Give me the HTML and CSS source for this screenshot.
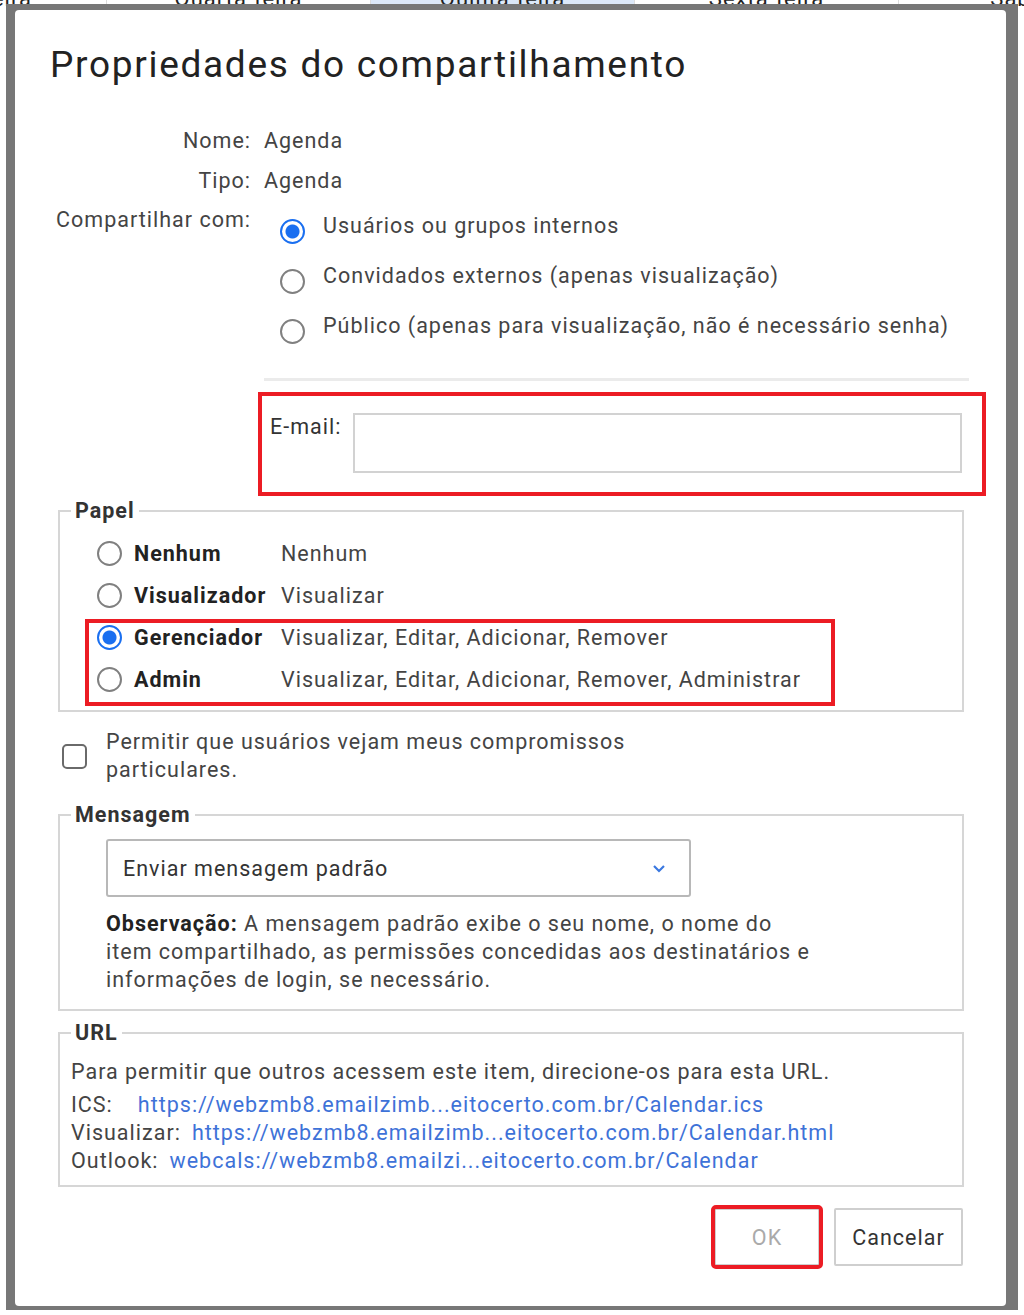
FILE: index.html
```html
<!DOCTYPE html>
<html lang="pt-BR">
<head>
    <meta charset="UTF-8">
    <title>Propriedades do compartilhamento</title>
    <link rel="stylesheet" href="styles.css">
</head>
<body>
    <div class="calendar">
        <div class="cal-head">
            <div class="cal-day">Terça-feira</div>
            <div class="cal-day">Quarta-feira</div>
            <div class="cal-day today">Quinta-feira</div>
            <div class="cal-day">Sexta-feira</div>
            <div class="cal-day">Sábado</div>
        </div>
    </div>

    <div class="overlay">
        <div class="dialog">
            <h1 class="dialog-title">Propriedades do compartilhamento</h1>

            <div class="info">
                <div class="info-label">Nome:</div>
                <div class="info-value">Agenda</div>
                <div class="info-label">Tipo:</div>
                <div class="info-value">Agenda</div>
                <div class="info-label share-label">Compartilhar com:</div>
                <div class="info-value">
                    <label class="share-option">
                        <input type="radio" name="share" class="radio" checked>
                        <span>Usuários ou grupos internos</span>
                    </label>
                    <label class="share-option">
                        <input type="radio" name="share" class="radio">
                        <span>Convidados externos (apenas visualização)</span>
                    </label>
                    <label class="share-option">
                        <input type="radio" name="share" class="radio">
                        <span>Público (apenas para visualização, não é necessário senha)</span>
                    </label>
                    <div class="separator"></div>
                </div>
            </div>

            <div class="email-box">
                <label class="email-label" for="email">E-mail:</label>
                <input type="text" id="email" class="email-input">
            </div>

            <fieldset class="group role-group">
                <legend>Papel</legend>
                <label class="role">
                    <input type="radio" name="role" class="radio">
                    <span class="role-name">Nenhum</span>
                    <span class="role-desc">Nenhum</span>
                </label>
                <label class="role">
                    <input type="radio" name="role" class="radio">
                    <span class="role-name">Visualizador</span>
                    <span class="role-desc">Visualizar</span>
                </label>
                <div class="highlight">
                    <label class="role">
                        <input type="radio" name="role" class="radio" checked>
                        <span class="role-name">Gerenciador</span>
                        <span class="role-desc">Visualizar, Editar, Adicionar, Remover</span>
                    </label>
                    <label class="role">
                        <input type="radio" name="role" class="radio">
                        <span class="role-name">Admin</span>
                        <span class="role-desc">Visualizar, Editar, Adicionar, Remover, Administrar</span>
                    </label>
                </div>
            </fieldset>

            <label class="private">
                <input type="checkbox" class="checkbox">
                <span class="private-text">Permitir que usuários vejam meus compromissos particulares.</span>
            </label>

            <fieldset class="group message-group">
                <legend>Mensagem</legend>
                <div class="select">
                    <span>Enviar mensagem padrão</span>
                    <svg class="chevron" width="14" height="9" viewBox="0 0 14 9">
                        <polyline points="2,2 7,7 12,2" fill="none" stroke="#3a78e0" stroke-width="2.2"/>
                    </svg>
                </div>
                <p class="note"><b>Observação:</b> A mensagem padrão exibe o seu nome, o nome do item compartilhado, as permissões concedidas aos destinatários e informações de login, se necessário.</p>
            </fieldset>

            <fieldset class="group url-group">
                <legend>URL</legend>
                <p class="url-intro">Para permitir que outros acessem este item, direcione-os para esta URL.</p>
                <div class="url-line"><span class="url-label ics">ICS:</span><a href="#">https://webzmb8.emailzimb...eitocerto.com.br/Calendar.ics</a></div>
                <div class="url-line"><span class="url-label">Visualizar:</span><a href="#">https://webzmb8.emailzimb...eitocerto.com.br/Calendar.html</a></div>
                <div class="url-line"><span class="url-label">Outlook:</span><a href="#">webcals://webzmb8.emailzi...eitocerto.com.br/Calendar</a></div>
            </fieldset>

            <div class="buttons">
                <button class="btn btn-ok" disabled>OK</button>
                <button class="btn btn-cancel">Cancelar</button>
            </div>
        </div>
    </div>
</body>
</html>
```

FILE: styles.css
```css
body {
    margin: 0;
    width: 1024px;
    height: 1315px;
    overflow: hidden;
    position: relative;
    background-color: #fff;
    font-family: Roboto, "Noto Sans", sans-serif;
    font-size: 21.5px;
    letter-spacing: 1px;
    color: #333;
}

/* calendar behind the modal */
.calendar {
    height: 10px;
    overflow: hidden;
}

.cal-head {
    display: flex;
    margin-left: -157px;
}

.cal-day {
    flex: 0 0 263px;
    text-align: center;
    font-size: 22px;
    line-height: 22px;
    margin-top: -12px;
    color: #222;
    border-right: 1px solid #ddd;
}

.cal-day.today {
    background-color: #dce8f8;
}

.overlay {
    position: absolute;
    top: 4px;
    left: 6px;
    width: 1012px;
    height: 1306px;
    background-color: #777;
}

.dialog {
    position: absolute;
    top: 6px;
    left: 9px;
    width: 991px;
    height: 1296px;
    box-sizing: border-box;
    padding: 33px 42px 0 43px;
    background-color: #fff;
    border-radius: 4px;
}

.dialog-title {
    margin: 0 0 0 -8px;
    font-size: 37px;
    line-height: 44px;
    letter-spacing: 1.7px;
    font-weight: 400;
    color: #222;
}

/* name / type / share with */
.info {
    display: grid;
    grid-template-columns: 201px 1fr;
    column-gap: 13px;
    margin: 34px 0 0 -8px;
}

.info-label {
    text-align: right;
    line-height: 40px;
    white-space: nowrap;
    color: #444;
}

.info-value {
    line-height: 40px;
    color: #444;
}

.share-label {
    line-height: 38px;
}

.share-option {
    display: flex;
    align-items: center;
    height: 50px;
    gap: 18px;
    padding-left: 16px;
    white-space: nowrap;
}

.share-option .radio {
    margin-top: 10px;
}

.separator {
    width: 705px;
    height: 3px;
    margin-top: 27px;
    background-color: #ebebeb;
}

.radio {
    appearance: none;
    flex: 0 0 auto;
    width: 25px;
    height: 25px;
    margin: 0;
    border: 2px solid #808080;
    border-radius: 50%;
    background-color: #fff;
    box-sizing: border-box;
}

.radio:checked {
    border-color: #1a6ff0;
    background: radial-gradient(circle, #1a6ff0 0 6.5px, #fff 7.5px);
}

/* e-mail */
.email-box {
    display: flex;
    width: 728px;
    box-sizing: border-box;
    margin: 11px 0 0 200px;
    padding: 17px 20px 19px 8px;
    border: 4px solid #ec1c24;
}

.email-label {
    width: 83px;
    line-height: 28px;
    color: #333;
}

.email-input {
    flex: 1;
    height: 60px;
    box-sizing: border-box;
    border: 2px solid #d2d2d2;
    font-size: 21px;
}

/* fieldsets */
.group {
    margin: 0;
    border: 2px solid #d6d6d6;
    min-width: 0;
}

.group legend {
    padding: 0 4px;
    font-weight: bold;
    line-height: 26px;
    color: #333;
}

.role-group {
    margin-top: 2px;
    padding: 8px 0 10px 37px;
}

.role-group legend {
    margin-left: -26px;
}

.role {
    display: flex;
    align-items: center;
    height: 42px;
    white-space: nowrap;
}

.role-name {
    width: 147px;
    margin-left: 12px;
    font-weight: bold;
    color: #222;
}

.role-desc {
    color: #444;
}

.highlight {
    position: relative;
}

.highlight::after {
    content: "";
    position: absolute;
    top: 3px;
    left: -12px;
    width: 750px;
    bottom: -6px;
    box-sizing: border-box;
    border: 4px solid #ec1c24;
}

/* private appointments */
.private {
    display: flex;
    align-items: center;
    gap: 19px;
    margin: 16px 0 0 4px;
}

.checkbox {
    appearance: none;
    flex: 0 0 auto;
    width: 25px;
    height: 25px;
    margin: 0;
    border: 2px solid #6a6a6a;
    border-radius: 5px;
    box-sizing: border-box;
}

.private-text {
    max-width: 560px;
    line-height: 28px;
    color: #444;
}

.message-group {
    margin-top: 18px;
    padding: 11px 0 15px 46px;
}

.message-group legend {
    margin-left: -35px;
}

.select {
    display: flex;
    align-items: center;
    justify-content: space-between;
    width: 585px;
    height: 58px;
    box-sizing: border-box;
    padding: 0 23px 0 15px;
    border: 2px solid #b8b8b8;
    border-radius: 3px;
    color: #333;
}

.note {
    max-width: 716px;
    margin: 13px 0 0;
    line-height: 28px;
    color: #444;
}

.note b {
    color: #222;
}

.url-group {
    margin-top: 9px;
    padding: 12px 0 10px 11px;
}

.url-group legend {
    margin-left: 0;
}

.url-intro {
    margin: 0 0 5px;
    line-height: 28px;
    color: #444;
}

.url-line {
    line-height: 28px;
    color: #444;
    white-space: nowrap;
}

.url-label {
    margin-right: 11px;
}

.url-label.ics {
    margin-right: 25px;
}

.url-line a {
    color: #3e72d8;
    text-decoration: none;
}

/* buttons */
.buttons {
    display: flex;
    justify-content: flex-end;
    gap: 14px;
    margin: 21px 1px 0 0;
}

.btn {
    width: 129px;
    height: 58px;
    padding: 0;
    border: 2px solid #cfcfcf;
    border-radius: 2px;
    background-color: #fff;
    font-family: inherit;
    font-size: 21.5px;
    letter-spacing: 1px;
    color: #333;
}

.btn-ok {
    width: 106px;
    color: #aaa;
    outline: 4px solid #ec1c24;
    outline-offset: -1px;
}
```
